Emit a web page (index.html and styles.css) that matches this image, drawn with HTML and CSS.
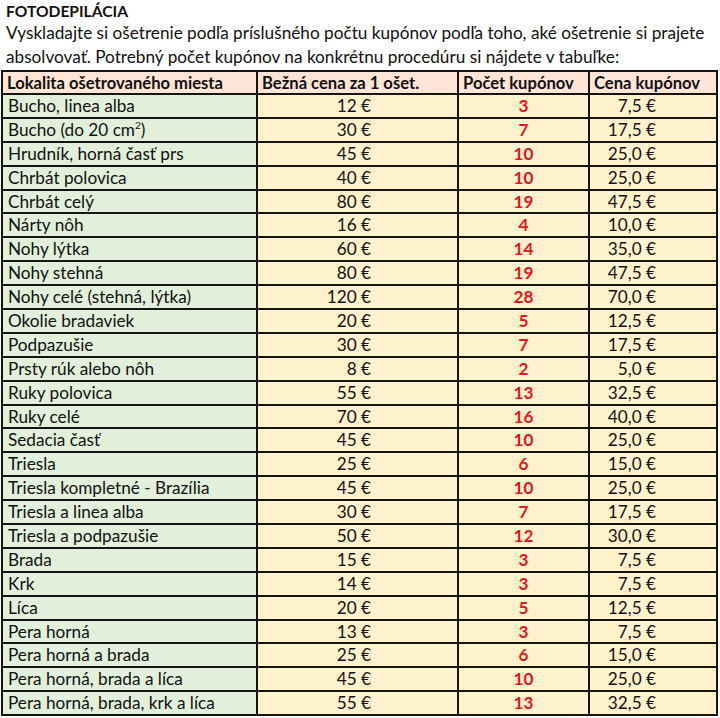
FILE: index.html
```html
<!DOCTYPE html>
<html lang="sk">
<head>
<meta charset="utf-8">
<title>Fotodepilácia</title>
<link rel="stylesheet" href="styles.css">
</head>
<body>
<div class="page">
  <h1 class="title">FOTODEPILÁCIA</h1>
  <p class="intro">Vyskladajte si ošetrenie podľa príslušného počtu kupónov podľa toho, aké ošetrenie si prajete absolvovať. Potrebný počet kupónov na konkrétnu procedúru si nájdete v tabuľke:</p>
  <table class="prices">
    <colgroup>
      <col class="c1"><col class="c2"><col class="c3"><col class="c4">
    </colgroup>
    <thead>
      <tr><th>Lokalita ošetrovaného miesta</th><th>Bežná cena za 1 ošet.</th><th>Počet kupónov</th><th>Cena kupónov</th></tr>
    </thead>
    <tbody>
      <tr><td class="loc">Bucho, linea alba</td><td class="price">12 €</td><td class="count">3</td><td class="cost">7,5 €</td></tr>
      <tr><td class="loc">Bucho (do 20 cm<sup>2</sup>)</td><td class="price">30 €</td><td class="count">7</td><td class="cost">17,5 €</td></tr>
      <tr><td class="loc">Hrudník, horná časť prs</td><td class="price">45 €</td><td class="count">10</td><td class="cost">25,0 €</td></tr>
      <tr><td class="loc">Chrbát polovica</td><td class="price">40 €</td><td class="count">10</td><td class="cost">25,0 €</td></tr>
      <tr><td class="loc">Chrbát celý</td><td class="price">80 €</td><td class="count">19</td><td class="cost">47,5 €</td></tr>
      <tr><td class="loc">Nárty nôh</td><td class="price">16 €</td><td class="count">4</td><td class="cost">10,0 €</td></tr>
      <tr><td class="loc">Nohy lýtka</td><td class="price">60 €</td><td class="count">14</td><td class="cost">35,0 €</td></tr>
      <tr><td class="loc">Nohy stehná</td><td class="price">80 €</td><td class="count">19</td><td class="cost">47,5 €</td></tr>
      <tr><td class="loc">Nohy celé (stehná, lýtka)</td><td class="price">120 €</td><td class="count">28</td><td class="cost">70,0 €</td></tr>
      <tr><td class="loc">Okolie bradaviek</td><td class="price">20 €</td><td class="count">5</td><td class="cost">12,5 €</td></tr>
      <tr><td class="loc">Podpazušie</td><td class="price">30 €</td><td class="count">7</td><td class="cost">17,5 €</td></tr>
      <tr><td class="loc">Prsty rúk alebo nôh</td><td class="price">8 €</td><td class="count">2</td><td class="cost">5,0 €</td></tr>
      <tr><td class="loc">Ruky polovica</td><td class="price">55 €</td><td class="count">13</td><td class="cost">32,5 €</td></tr>
      <tr><td class="loc">Ruky celé</td><td class="price">70 €</td><td class="count">16</td><td class="cost">40,0 €</td></tr>
      <tr><td class="loc">Sedacia časť</td><td class="price">45 €</td><td class="count">10</td><td class="cost">25,0 €</td></tr>
      <tr><td class="loc">Triesla</td><td class="price">25 €</td><td class="count">6</td><td class="cost">15,0 €</td></tr>
      <tr><td class="loc">Triesla kompletné - Brazília</td><td class="price">45 €</td><td class="count">10</td><td class="cost">25,0 €</td></tr>
      <tr><td class="loc">Triesla a linea alba</td><td class="price">30 €</td><td class="count">7</td><td class="cost">17,5 €</td></tr>
      <tr><td class="loc">Triesla a podpazušie</td><td class="price">50 €</td><td class="count">12</td><td class="cost">30,0 €</td></tr>
      <tr><td class="loc">Brada</td><td class="price">15 €</td><td class="count">3</td><td class="cost">7,5 €</td></tr>
      <tr><td class="loc">Krk</td><td class="price">14 €</td><td class="count">3</td><td class="cost">7,5 €</td></tr>
      <tr><td class="loc">Líca</td><td class="price">20 €</td><td class="count">5</td><td class="cost">12,5 €</td></tr>
      <tr><td class="loc">Pera horná</td><td class="price">13 €</td><td class="count">3</td><td class="cost">7,5 €</td></tr>
      <tr><td class="loc">Pera horná a brada</td><td class="price">25 €</td><td class="count">6</td><td class="cost">15,0 €</td></tr>
      <tr><td class="loc">Pera horná, brada a líca</td><td class="price">45 €</td><td class="count">10</td><td class="cost">25,0 €</td></tr>
      <tr><td class="loc">Pera horná, brada, krk a líca</td><td class="price">55 €</td><td class="count">13</td><td class="cost">32,5 €</td></tr>
    </tbody>
  </table>
</div>
</body>
</html>
```

FILE: styles.css
```css
html, body {
  margin: 0;
  padding: 0;
  background: #ffffff;
}

body {
  font-family: Lato, "Open Sans", "Liberation Sans", sans-serif;
  font-size: 17.2px;
  color: #111111;
}

.page {
  width: 720px;
  padding: 0 0 0 1px;
  box-sizing: border-box;
}

.title {
  margin: 0;
  padding: 1px 0 0 5px;
  font-size: 15.6px;
  font-weight: 700;
  line-height: 20px;
}

.intro {
  margin: 0;
  padding: 0 6px 0 5px;
  line-height: 24px;
  font-size: 17.2px;
}

.prices {
  margin-top: 1px;
  border-collapse: collapse;
  table-layout: fixed;
  width: 715px;
  border: 2px solid #141414;
}

.c1 { width: 255px; }
.c2 { width: 201px; }
.c3 { width: 131px; }
.c4 { width: 128px; }

.prices th,
.prices td {
  border: 2px solid #141414;
  height: 23.9px;
  padding: 0 5px;
  box-sizing: border-box;
  line-height: 20px;
  white-space: nowrap;
  overflow: hidden;
}

.prices th {
  height: 23px;
  background: #fce4d6;
  text-align: left;
  font-weight: 700;
  font-size: 16.6px;
  padding-left: 4px;
}

.prices td {
  background: #fff2cc;
}

.prices td.loc {
  background: #e2efda;
  text-align: left;
}

.prices td.price {
  text-align: right;
  padding-right: 86px;
}

.prices td.count {
  text-align: center;
  color: #e8151b;
  font-weight: 700;
}

.prices td.cost {
  text-align: right;
  padding-right: 60px;
}

sup {
  font-size: 10px;
  line-height: 0;
  vertical-align: 7px;
}
```
